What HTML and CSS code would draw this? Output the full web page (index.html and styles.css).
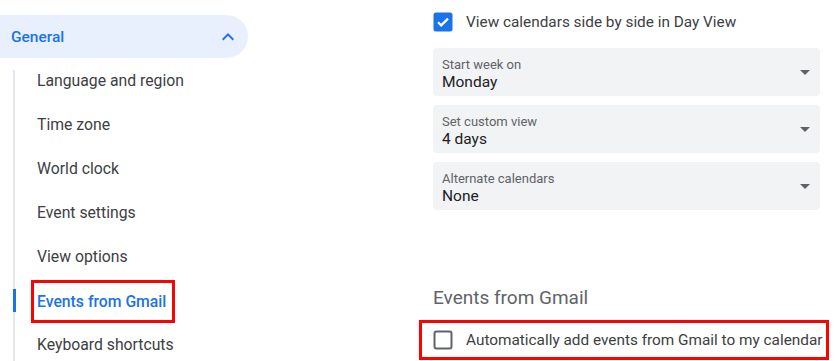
FILE: index.html
```html
<!DOCTYPE html>
<html lang="en">
<head>
    <meta charset="UTF-8" />
    <title>Settings</title>
    <link rel="stylesheet" href="styles.css">
</head>
<body>
<div class="page">
    <nav class="sidebar">
        <div class="nav-group">
            <span>General</span>
            <svg class="chevron" width="24" height="24" viewBox="0 0 24 24"><path d="M12 8l-6 6 1.41 1.41L12 10.83l4.59 4.58L18 14z" fill="#1a73e8"/></svg>
        </div>
        <ul class="nav-list">
            <li>Language and region</li>
            <li>Time zone</li>
            <li>World clock</li>
            <li>Event settings</li>
            <li>View options</li>
            <li class="active"><span class="mark">Events from Gmail</span></li>
            <li>Keyboard shortcuts</li>
        </ul>
    </nav>

    <main class="content">
        <label class="check-row">
            <svg class="box" width="20" height="20" viewBox="0 0 20 20">
                <rect x="0.5" y="0.5" width="19" height="19" rx="2.5" fill="#1a73e8"/>
                <path d="M5 10.2l3.2 3.2L15 6.6" stroke="#fff" stroke-width="2.2" fill="none"/>
            </svg>
            <span>View calendars side by side in Day View</span>
        </label>

        <div class="select">
            <div>
                <div class="select-label">Start week on</div>
                <div class="select-value">Monday</div>
            </div>
            <span class="arrow"></span>
        </div>
        <div class="select">
            <div>
                <div class="select-label">Set custom view</div>
                <div class="select-value">4 days</div>
            </div>
            <span class="arrow"></span>
        </div>
        <div class="select">
            <div>
                <div class="select-label">Alternate calendars</div>
                <div class="select-value">None</div>
            </div>
            <span class="arrow"></span>
        </div>

        <h2 class="section-title">Events from Gmail</h2>

        <div class="mark-row">
            <label class="check-row">
                <svg class="box" width="20" height="20" viewBox="0 0 20 20">
                    <rect x="1.5" y="1.5" width="17" height="17" rx="2" fill="none" stroke="#5f6368" stroke-width="2"/>
                </svg>
                <span>Automatically add events from Gmail to my calendar</span>
            </label>
        </div>
    </main>
</div>
</body>
</html>
```

FILE: styles.css
```css
* {
    box-sizing: border-box;
    margin: 0;
    padding: 0;
}

body {
    background-color: white;
    font-family: Roboto, 'Liberation Sans', Arial, sans-serif;
    color: #3c4043;
    overflow: hidden;
}

.page {
    display: flex;
    height: 361px;
}

.sidebar {
    width: 248px;
    flex-shrink: 0;
    padding-top: 15px;
}

.nav-group {
    height: 43px;
    display: flex;
    align-items: center;
    justify-content: space-between;
    padding: 0 8px 0 11px;
    background-color: #e8f0fe;
    border-radius: 0 22px 22px 0;
    color: #1a73e8;
    font-size: 15.5px;
    font-weight: 500;
}

.nav-list {
    list-style: none;
    margin: 12px 0 0 13px;
    border-left: 2px solid #e6e7ee;
}

.nav-list li {
    position: relative;
    display: flex;
    align-items: flex-start;
    height: 44px;
    line-height: 22px;
    padding-left: 22px;
    font-size: 15.75px;
    color: #3c4043;
}

.nav-list li.active {
    color: #1a73e8;
    font-weight: 500;
}

.nav-list li.active::before {
    content: '';
    position: absolute;
    left: -2px;
    top: -1px;
    width: 3px;
    height: 23px;
    background-color: #1a73e8;
}

.mark {
    display: inline-block;
    border: 3px solid #f00;
    line-height: 37px;
    padding: 0 6px 0 3px;
    margin: -10px 0 0 -6px;
}

.content {
    flex: 1;
    min-width: 0;
    padding: 10px 15px 0 185px;
}

.check-row {
    display: flex;
    align-items: center;
    height: 23px;
    font-size: 15.35px;
    color: #3c4043;
    white-space: nowrap;
}

.check-row .box {
    flex-shrink: 0;
    margin-right: 13px;
}

.select {
    display: flex;
    align-items: center;
    justify-content: space-between;
    height: 48px;
    margin-top: 15px;
    padding: 3px 10px 0 9px;
    background-color: #f1f3f4;
    border-radius: 4px;
}

.select + .select {
    margin-top: 9px;
}

.select-label {
    font-size: 13px;
    color: #5f6368;
    line-height: 17px;
}

.select-value {
    font-size: 15.5px;
    color: #202124;
    line-height: 19px;
}

.arrow {
    width: 0;
    height: 0;
    margin-top: -3px;
    border-left: 5px solid transparent;
    border-right: 5px solid transparent;
    border-top: 5px solid #5f6368;
}

.section-title {
    margin-top: 76px;
    font-size: 19px;
    font-weight: 400;
    line-height: 24px;
    color: #5f6368;
}

.mark-row {
    margin: 10px -9px 0 -14px;
    height: 40px;
    border: 3px solid #f00;
    padding: 5px 0 0 11px;
}
```
